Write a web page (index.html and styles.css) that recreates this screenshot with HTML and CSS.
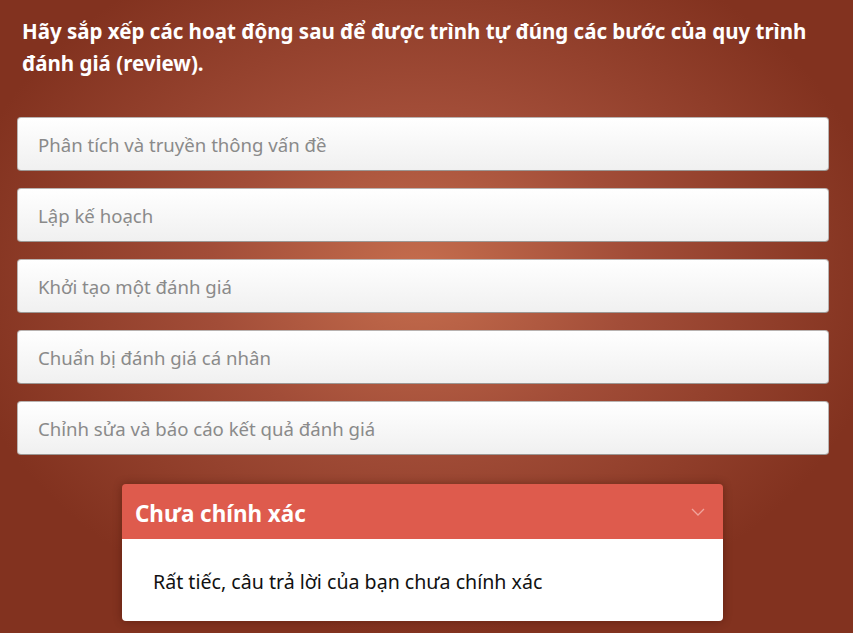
FILE: index.html
```html
<!DOCTYPE html>
<html lang="vi">
<head>
<meta charset="utf-8">
<link rel="stylesheet" href="styles.css">
</head>
<body>
<main class="page">
  <h1 class="question">Hãy sắp xếp các hoạt động sau để được trình tự đúng các bước của quy trình đánh giá (review).</h1>
  <ul class="items">
    <li class="item">Phân tích và truyền thông vấn đề</li>
    <li class="item">Lập kế hoạch</li>
    <li class="item">Khởi tạo một đánh giá</li>
    <li class="item">Chuẩn bị đánh giá cá nhân</li>
    <li class="item">Chỉnh sửa và báo cáo kết quả đánh giá</li>
  </ul>
  <section class="feedback">
    <header class="feedback-head">
      <span class="feedback-title">Chưa chính xác</span>
      <svg class="chevron" width="14" height="8" viewBox="0 0 14 8"><path d="M1 1 L7 7 L13 1" fill="none" stroke="#f0a49c" stroke-width="1.3"/></svg>
    </header>
    <div class="feedback-body">Rất tiếc, câu trả lời của bạn chưa chính xác</div>
  </section>
</main>
</body>
</html>
```
FILE: styles.css
```css
html, body {
  margin: 0;
  padding: 0;
  height: 100%;
}
body {
  background: radial-gradient(ellipse 470px 360px at 420px 275px, #c66e4e 0%, #a24d38 45%, #82321f 100%);
  background-color: #80311f;
  font-family: "Noto Sans", "Open Sans", sans-serif;
  overflow: hidden;
}
.page {
  padding: 15px 24px 0 17px;
}
.question {
  margin: 0 0 0 5px;
  color: #ffffff;
  font-size: 20.5px;
  font-weight: 700;
  line-height: 32px;
}
.items {
  list-style: none;
  margin: 38px 0 0 0;
  padding: 0;
  display: flex;
  flex-direction: column;
  gap: 17px;
}
.item {
  height: 54px;
  box-sizing: border-box;
  display: flex;
  align-items: center;
  padding-left: 20px;
  border: 1px solid #b9b3b1;
  border-bottom-color: #9c9794;
  border-radius: 4px;
  background: linear-gradient(#ffffff, #f0f0f0);
  color: #8a8a8a;
  font-size: 18.6px;
}
.feedback {
  margin: 29px 106px 0 105px;
  border-radius: 4px;
  overflow: hidden;
  box-shadow: 0 0 8px rgba(60, 15, 5, 0.45);
}
.feedback-head {
  height: 55px;
  background: #de5b4d;
  display: flex;
  align-items: center;
  justify-content: space-between;
  padding: 0 18px 0 13px;
}
.feedback-title {
  color: #ffffff;
  font-size: 22.4px;
  font-weight: 700;
  padding-top: 4px;
}
.feedback-body {
  background: #ffffff;
  height: 82px;
  box-sizing: border-box;
  padding: 29px 0 0 31px;
  color: #111111;
  font-size: 19.6px;
}
```
